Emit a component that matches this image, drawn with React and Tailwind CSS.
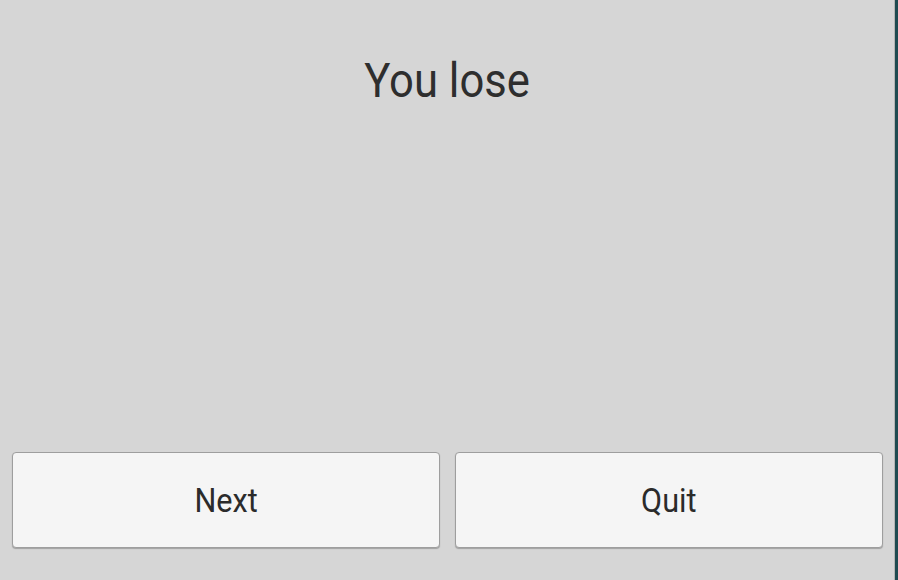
import React from "react";

const font = { fontFamily: "Roboto, 'Noto Sans', sans-serif" };

const GameButton = ({ label }) => (
  <button
    className="flex-1 h-[96px] rounded-[4px] border border-[#9e9e9e] bg-[#f5f5f5] shadow-[0_1px_1px_rgba(0,0,0,0.25)] text-[34px] leading-[34px] text-[#2b2b2b] flex items-center justify-center"
    style={font}
  >
    <span className="inline-block scale-x-[0.9]">{label}</span>
  </button>
);

const App = () => {
  return (
    <div className="w-[898px] h-[580px] flex bg-[#1f4b51] overflow-hidden" style={font}>
      <div className="w-[895px] h-full bg-[#d6d6d6] border-r border-[#b5b5b5] flex flex-col">
        <div className="pt-[56px] text-center text-[49px] leading-[49px] text-[#2e2e2e]">
          <span className="inline-block scale-x-[0.89]">You lose</span>
        </div>
        <div className="flex-1" />
        <div className="flex gap-[15px] pl-[12px] pr-[11px] pb-[32px]">
          <GameButton label="Next" />
          <GameButton label="Quit" />
        </div>
      </div>
    </div>
  );
};

export default App;
